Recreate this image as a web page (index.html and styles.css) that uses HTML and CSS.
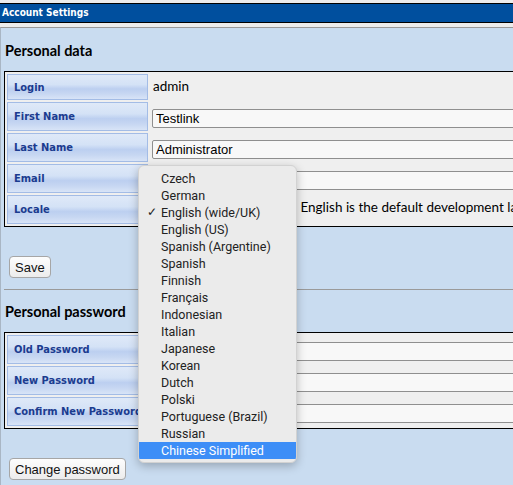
FILE: index.html
```html
<!DOCTYPE html>
<html>
<head>
	<title>Account Settings</title>
	<link rel="stylesheet" href="styles.css">
</head>
<body>
	<div class="title">Account Settings</div>
	<div class="workBack">
		<h2>Personal data</h2>
		<table class="common">
			<tr class="short">
				<th>Login</th>
				<td class="plain">admin</td>
			</tr>
			<tr>
				<th>First Name</th>
				<td><input type="text" value="Testlink"></td>
			</tr>
			<tr>
				<th>Last Name</th>
				<td><input type="text" value="Administrator"></td>
			</tr>
			<tr>
				<th>Email</th>
				<td><input type="text" value=""></td>
			</tr>
			<tr>
				<th>Locale</th>
				<td class="plain">
					<span class="select">Chinese Simplified</span>
					English is the default development language
				</td>
			</tr>
		</table>
		<div class="actions">
			<button>Save</button>
		</div>
		<hr>
		<h2>Personal password</h2>
		<table class="common">
			<tr>
				<th>Old Password</th>
				<td><input type="password"></td>
			</tr>
			<tr>
				<th>New Password</th>
				<td><input type="password"></td>
			</tr>
			<tr>
				<th>Confirm New Password</th>
				<td><input type="password"></td>
			</tr>
		</table>
		<div class="actions">
			<button>Change password</button>
		</div>
	</div>

	<!-- the open locale list, drawn over the form -->
	<ul class="menu">
		<li>Czech</li>
		<li>German</li>
		<li class="checked">English (wide/UK)</li>
		<li>English (US)</li>
		<li>Spanish (Argentine)</li>
		<li>Spanish</li>
		<li>Finnish</li>
		<li>Français</li>
		<li>Indonesian</li>
		<li>Italian</li>
		<li>Japanese</li>
		<li>Korean</li>
		<li>Dutch</li>
		<li>Polski</li>
		<li>Portuguese (Brazil)</li>
		<li>Russian</li>
		<li class="active">Chinese Simplified</li>
	</ul>
</body>
</html>
```

FILE: styles.css
```css
html {
	overflow: hidden;
}
body {
	margin: 0;
	background-color: #ececec;
	font-family: Lato, "DejaVu Sans", sans-serif;
	font-size: 13.5px;
	color: #000;
	width: 760px;
}

.title {
	margin-top: 3px;
	height: 18px;
	line-height: 18px;
	padding-left: 2px;
	background-color: #004f9e;
	border-top: 1px solid #000;
	border-bottom: 1px solid #000;
	color: white;
	font-family: "DejaVu Sans Condensed", "DejaVu Sans", sans-serif;
	font-weight: bold;
	font-size: 10px;
}

.workBack {
	margin-top: 4px;
	border-top: 1px solid #999;
	border-left: 1px solid #a9b6c4;
	background-color: #c9dcf0;
	padding: 1px 0 10px 3px;
}

h2 {
	margin: 13px 0 11px 1px;
	font-size: 14.5px;
	font-weight: bold;
	line-height: 18px;
}

.common {
	width: 700px;
	background-color: #efefef;
	border: 1px solid #000;
	border-spacing: 2px;
}
.common th {
	width: 127px;
	height: 27px;
	padding: 0 6px;
	border: 1px solid #a3bce6;
	background: linear-gradient(#dfe9f8 0%, #d4e2f6 40%, #bccff0 58%, #c7d7f2 78%, #d8e4f7 100%);
	color: #1b3b8f;
	font-family: "DejaVu Sans Condensed", "DejaVu Sans", sans-serif;
	font-size: 11px;
	text-align: left;
	white-space: nowrap;
	vertical-align: middle;
}
.common tr.short th {
	height: 24px;
}
.common td {
	padding: 3px 0 0 2px;
	vertical-align: middle;
}
.common td.plain {
	padding: 0 0 2px 3px;
	white-space: nowrap;
}

input {
	width: 520px;
	height: 19px;
	box-sizing: border-box;
	margin: 0;
	padding: 0 3px;
	border: 1px solid #8f8f8f;
	border-radius: 2px;
	background-color: #f8f8f8;
	font-family: "Liberation Sans", Arial, sans-serif;
	font-size: 13px;
}

.select {
	display: inline-block;
	width: 144px;
	height: 19px;
	box-sizing: border-box;
	border: 1px solid #8f8f8f;
	border-radius: 4px;
	background-color: #f8f8f8;
	vertical-align: middle;
	font-family: "Liberation Sans", Arial, sans-serif;
	font-size: 12px;
	color: transparent;
	overflow: hidden;
}

.actions {
	padding: 29px 0 0 5px;
}
button {
	height: 22px;
	padding: 0 5px;
	border: 1px solid #a6a6a6;
	border-radius: 4px;
	background: linear-gradient(#fdfdfd, #ececec);
	font-family: "Liberation Sans", Arial, sans-serif;
	font-size: 13px;
	color: #111;
}

hr {
	margin: 11px 0 0 0;
	border: none;
	border-top: 1px solid #9a9a9a;
}

.menu {
	position: absolute;
	left: 138px;
	top: 165px;
	width: 157px;
	margin: 0;
	padding: 4px 0 3px 0;
	list-style: none;
	background-color: #ebebeb;
	border: 1px solid #d2d2d2;
	border-radius: 6px;
	box-shadow: 0 3px 10px rgba(0, 0, 0, 0.25);
	font-family: Roboto, "Liberation Sans", sans-serif;
	font-size: 12.5px;
	color: #222;
	overflow: hidden;
}
.menu li {
	height: 17px;
	line-height: 17px;
	padding-left: 22px;
	position: relative;
}
.menu li.checked::before {
	content: "\2713";
	position: absolute;
	left: 8px;
	font-size: 12px;
}
.menu li.active {
	background-color: #3d8ef7;
	color: white;
}
```
